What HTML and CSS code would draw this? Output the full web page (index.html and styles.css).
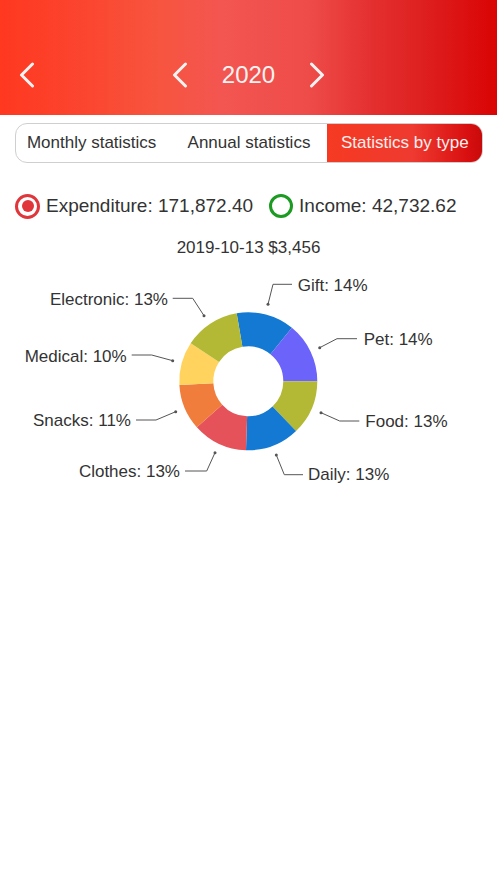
FILE: index.html
```html
<!DOCTYPE html>
<html lang="en">
<head>
<meta charset="utf-8">
<title>Statistics by type</title>
<link rel="stylesheet" href="styles.css">
</head>
<body>
<header class="topbar">
  <div class="topbar-side">
    <svg class="chev" width="16" height="26" viewBox="0 0 16 26"><path d="M13.5 2 L2.5 13 L13.5 24"/></svg>
  </div>
  <div class="year-nav">
    <svg class="chev" width="16" height="26" viewBox="0 0 16 26"><path d="M13.5 2 L2.5 13 L13.5 24"/></svg>
    <span class="year">2020</span>
    <svg class="chev" width="16" height="26" viewBox="0 0 16 26"><path d="M2.5 2 L13.5 13 L2.5 24"/></svg>
  </div>
  <div class="topbar-side"></div>
</header>

<nav class="tabs">
  <div class="tab tab-first">Monthly statistics</div>
  <div class="tab">Annual statistics</div>
  <div class="tab tab-active">Statistics by type</div>
</nav>

<div class="legend">
  <span class="radio radio-on"></span>
  <span class="legend-text">Expenditure: 171,872.40</span>
  <span class="radio radio-green"></span>
  <span class="legend-text">Income: 42,732.62</span>
</div>

<div class="date-line">2019-10-13 $3,456</div>

<svg class="chart" width="497" height="240" viewBox="0 0 497 240">
  <g transform="translate(0,-258)">
    <path fill="#1479d2" d="M236.67 313.29 A69 69 0 0 1 291.91 327.83 L270.42 354.18 A35 35 0 0 0 242.40 346.80 Z"/>
    <path fill="#6c63fb" d="M291.91 327.83 A69 69 0 0 1 317.3 381.3 L283.3 381.3 A35 35 0 0 0 270.42 354.18 Z"/>
    <path fill="#b3b934" d="M317.3 381.3 A69 69 0 0 1 296.05 431.10 L272.52 406.56 A35 35 0 0 0 283.3 381.3 Z"/>
    <path fill="#1479d2" d="M296.05 431.10 A69 69 0 0 1 246.01 450.26 L247.14 416.28 A35 35 0 0 0 272.52 406.56 Z"/>
    <path fill="#e5525a" d="M246.01 450.26 A69 69 0 0 1 196.86 427.29 L222.21 404.63 A35 35 0 0 0 247.14 416.28 Z"/>
    <path fill="#f07d3c" d="M196.86 427.29 A69 69 0 0 1 179.40 385.03 L213.35 383.19 A35 35 0 0 0 222.21 404.63 Z"/>
    <path fill="#ffd35e" d="M179.40 385.03 A69 69 0 0 1 190.70 343.32 L219.08 362.03 A35 35 0 0 0 213.35 383.19 Z"/>
    <path fill="#b3b934" d="M190.70 343.32 A69 69 0 0 1 236.67 313.29 L242.40 346.80 A35 35 0 0 0 219.08 362.03 Z"/>

    <g class="leaders">
      <polyline points="172.7,298.3 192.7,298.3 204,315.7"/>
      <polyline points="131.7,355 151.7,355 172.7,360.7"/>
      <polyline points="136,420 156,420 175.7,411.7"/>
      <polyline points="185,471 206.7,471 215,452.7"/>
      <polyline points="292,284.3 273,284.3 268,304.3"/>
      <polyline points="357,338.7 337,338.7 319.7,347.7"/>
      <polyline points="359.3,421 339.7,421 321,412.7"/>
      <polyline points="303,474.7 284.3,474.7 276.3,455"/>
    </g>
    <g class="dots">
      <circle cx="204" cy="315.7" r="1.5"/>
      <circle cx="172.7" cy="360.7" r="1.5"/>
      <circle cx="175.7" cy="411.7" r="1.5"/>
      <circle cx="215" cy="452.7" r="1.5"/>
      <circle cx="268" cy="304.3" r="1.5"/>
      <circle cx="319.7" cy="347.7" r="1.5"/>
      <circle cx="321" cy="412.7" r="1.5"/>
      <circle cx="276.3" cy="455" r="1.5"/>
    </g>
    <g class="labels">
      <text class="lbl-end" x="168" y="299.3">Electronic: 13%</text>
      <text class="lbl-end" x="126.7" y="356.7">Medical: 10%</text>
      <text class="lbl-end" x="131" y="420.7">Snacks: 11%</text>
      <text class="lbl-end" x="180" y="471.7">Clothes: 13%</text>
      <text x="297.7" y="285">Gift: 14%</text>
      <text x="363.7" y="339.3">Pet: 14%</text>
      <text x="365.3" y="421.7">Food: 13%</text>
      <text x="308" y="474.3">Daily: 13%</text>
    </g>
  </g>
</svg>
</body>
</html>
```

FILE: styles.css
```css
* {
  box-sizing: border-box;
}

html, body {
  margin: 0;
  padding: 0;
  background: #ffffff;
}

body {
  font-family: "Liberation Sans", Arial, Helvetica, sans-serif;
  color: #333333;
  width: 497px;
}

.topbar {
  height: 115px;
  display: grid;
  grid-template-columns: 1fr auto 1fr;
  align-items: end;
  padding: 0 0 27px 0;
  background: linear-gradient(90deg, #ff3820 0%, #fb4630 18%, #f7553f 32%, #f35551 45%, #ee4c49 62%, #e42f2f 75%, #de2020 85%, #da0404 100%);
}

.topbar-side {
  display: flex;
  align-items: center;
  padding-left: 19px;
  height: 26px;
}

.chev {
  display: block;
}

.chev path {
  fill: none;
  stroke: #f8f3f2;
  stroke-width: 3;
  stroke-linecap: round;
  stroke-linejoin: round;
}

.year-nav {
  display: flex;
  align-items: center;
  gap: 34px;
  height: 26px;
}

.year {
  color: #f8f3f2;
  font-size: 24px;
  line-height: 26px;
}

.tabs {
  margin: 8px 14px 0 15px;
  height: 40px;
  border: 1px solid #cfcfcf;
  border-radius: 12px;
  display: grid;
  grid-template-columns: 1fr 1fr 1fr;
  overflow: hidden;
}

.tab {
  display: flex;
  align-items: center;
  justify-content: center;
  font-size: 17px;
  color: #333333;
  white-space: nowrap;
}

.tab-first {
  padding-right: 4px;
}

.tab-active {
  color: #fbefee;
  margin: -1px -1px -1px 0;
  border-radius: 0 12px 12px 0;
  background: linear-gradient(90deg, #f63a22 0%, #ee3a30 55%, #d80f10 90%, #c80a0a 100%);
}

.legend {
  margin-top: 30px;
  height: 26px;
  padding-left: 15px;
  display: flex;
  align-items: center;
}

.radio {
  width: 25px;
  height: 25px;
  border-radius: 50%;
  flex: none;
  display: flex;
  align-items: center;
  justify-content: center;
}

.radio-on {
  border: 3.3px solid #e0353a;
}

.radio-on::after {
  content: "";
  width: 12px;
  height: 12px;
  border-radius: 50%;
  background: #e0353a;
}

.radio-green {
  width: 24px;
  height: 24px;
  border: 3px solid #1c9a22;
  margin-left: 16px;
}

.legend-text {
  font-size: 19px;
  color: #333333;
  margin-left: 6px;
  white-space: nowrap;
}

.date-line {
  margin-top: 19px;
  height: 20px;
  line-height: 20px;
  font-size: 17px;
  text-align: center;
  color: #333333;
}

.chart {
  display: block;
}

.leaders polyline {
  fill: none;
  stroke: #555555;
  stroke-width: 1;
}

.dots circle {
  fill: #555555;
}

.labels text {
  font-family: "Liberation Sans", Arial, Helvetica, sans-serif;
  font-size: 17px;
  fill: #333333;
  dominant-baseline: central;
}

.labels .lbl-end {
  text-anchor: end;
}
```
